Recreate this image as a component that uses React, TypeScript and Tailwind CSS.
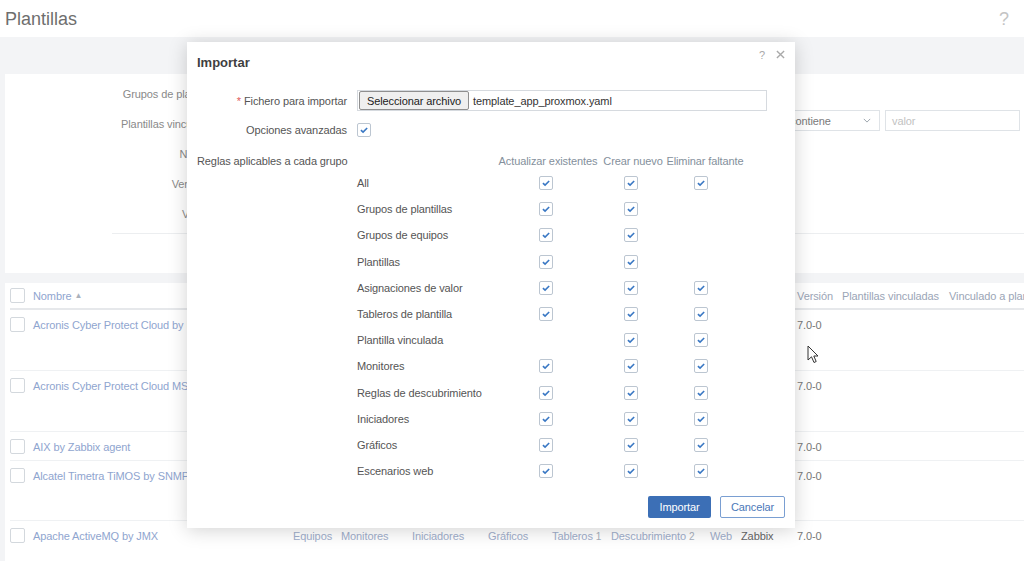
import React from "react"

type Rule = { name: string; marks: (boolean | null)[] }

const rules: Rule[] = [
  { name: "All", marks: [true, true, true] },
  { name: "Grupos de plantillas", marks: [true, true, null] },
  { name: "Grupos de equipos", marks: [true, true, null] },
  { name: "Plantillas", marks: [true, true, null] },
  { name: "Asignaciones de valor", marks: [true, true, true] },
  { name: "Tableros de plantilla", marks: [true, true, true] },
  { name: "Plantilla vinculada", marks: [null, true, true] },
  { name: "Monitores", marks: [true, true, true] },
  { name: "Reglas de descubrimiento", marks: [true, true, true] },
  { name: "Iniciadores", marks: [true, true, true] },
  { name: "Gráficos", marks: [true, true, true] },
  { name: "Escenarios web", marks: [true, true, true] },
]

const rows = [
  { name: "Acronis Cyber Protect Cloud by HTTP", h: "h-[61px]" },
  { name: "Acronis Cyber Protect Cloud MSP by HTTP", h: "h-[61px]" },
  { name: "AIX by Zabbix agent", h: "h-[29px]" },
  { name: "Alcatel Timetra TiMOS by SNMP", h: "h-[60px]" },
  { name: "Apache ActiveMQ by JMX", h: "h-[60px]" },
]

const cols = "grid grid-cols-[23px_260px_48px_71px_76px_64px_59px_99px_31px_56px_45px_107px_200px]"

function Check({ on }: { on?: boolean }) {
  return (
    <span className="inline-flex h-[14px] w-[14px] items-center justify-center rounded-[2px] border border-[#bcc6d1] bg-white">
      {on && (
        <svg viewBox="0 0 12 12" className="h-[10px] w-[10px]">
          <path d="M2.3 6.1 4.9 8.6 9.8 3.6" fill="none" stroke="#3a78c4" strokeWidth="1.9" />
        </svg>
      )}
    </span>
  )
}

function BoxOff() {
  return <span className="block h-[15px] w-[15px] rounded-[2px] border border-[#d3d8dd] bg-white" />
}

function FilterLabel({ text }: { text: string }) {
  return <div className="flex h-[30px] items-center justify-end text-[#8a8a8a]">{text}</div>
}

export default function App() {
  return (
    <div className="relative h-[561px] w-[1024px] overflow-hidden bg-[#f3f4f6] font-['Liberation_Sans',Arial,sans-serif] text-[11px] leading-[14px] tracking-[-0.1px]">
      {/* Header */}
      <div className="flex h-[37px] items-center justify-between bg-white pl-[5px] pr-[15px]">
        <div className="text-[18px] leading-[22px] tracking-normal text-[#6e6e6e]">Plantillas</div>
        <div className="text-[18px] leading-[22px] text-[#c4c4c4]">?</div>
      </div>

      {/* Filter */}
      <div className="ml-[5px] mt-[37px] h-[199px] w-[1100px] bg-white pt-[5px] whitespace-nowrap">
        <div className="flex">
          <div className="w-[213px]">
            <FilterLabel text="Grupos de plantillas" />
            <FilterLabel text="Plantillas vinculadas" />
            <FilterLabel text="Nombre" />
            <FilterLabel text="Vendedor" />
            <FilterLabel text="Versión" />
          </div>
          <div className="ml-[562px] pt-[31px]">
            <div className="flex gap-[5px]">
              <div className="flex h-[21px] w-[100px] items-center justify-between border border-[#dfe3e7] pl-[9px] pr-[8px] text-[#7a7a7a]">
                <span>contiene</span>
                <svg viewBox="0 0 10 6" className="h-[5px] w-[8px]">
                  <path d="M1 1 5 5 9 1" fill="none" stroke="#9aa2aa" strokeWidth="1.2" />
                </svg>
              </div>
              <div className="flex h-[21px] w-[135px] items-center border border-[#dfe3e7] pl-[6px] text-[#c2c2c2]">valor</div>
            </div>
          </div>
        </div>
        <div className="ml-[107px] mt-[4px] h-px w-[993px] bg-[#eceef0]" />
      </div>

      {/* Table */}
      <div className="ml-[5px] mt-[10px] h-[300px] w-[1100px] bg-white pl-[5px] text-[#8fa5cf]">
        <div className={`${cols} h-[27px] items-center border-b-2 border-[#e6e8eb] whitespace-nowrap`}>
          <BoxOff />
          <div className="flex items-center gap-[3px]">
            Nombre <span className="text-[8px] text-[#aab2bc]">▲</span>
          </div>
          <div>Equipos</div>
          <div>Monitores</div>
          <div>Iniciadores</div>
          <div>Gráficos</div>
          <div>Tableros</div>
          <div>Descubrimiento</div>
          <div>Web</div>
          <div>Proveedor</div>
          <div className="text-[#9ba5b6]">Versión</div>
          <div className="text-[#9ba5b6]">Plantillas vinculadas</div>
          <div className="text-[#9ba5b6]">Vinculado a plantillas</div>
        </div>
        {rows.map((r) => (
          <div key={r.name} className={`${cols} ${r.h} items-start border-b border-[#eff1f3] pt-[7px] whitespace-nowrap`}>
            <BoxOff />
            <div className="pt-[1px]">{r.name}</div>
            <div className="pt-[1px] text-[#a0aecb]">Equipos</div>
            <div className="pt-[1px] text-[#a0aecb]">Monitores</div>
            <div className="pt-[1px] text-[#a0aecb]">Iniciadores</div>
            <div className="pt-[1px] text-[#a0aecb]">Gráficos</div>
            <div className="pt-[1px] text-[#a0aecb]">
              Tableros <span className="text-[10px] text-[#a8b0bc]">1</span>
            </div>
            <div className="pt-[1px] text-[#a0aecb]">
              Descubrimiento <span className="text-[10px] text-[#a8b0bc]">2</span>
            </div>
            <div className="pt-[1px] text-[#a0aecb]">Web</div>
            <div className="pt-[1px] text-[#666]">Zabbix</div>
            <div className="pt-[1px] text-[#777]">7.0-0</div>
            <div />
            <div />
          </div>
        ))}
      </div>

      {/* Mouse pointer */}
      <svg viewBox="0 0 12 19" className="absolute left-[807px] top-[345px] h-[19px] w-[12px]">
        <path d="M1 1 1 15 4.5 11.8 7 17.5 9.2 16.5 6.8 11 11 11Z" fill="white" stroke="#333" strokeWidth="1" strokeLinejoin="round" />
      </svg>

      {/* Import dialog */}
      <div className="absolute left-[187px] top-[42px] flex h-[486px] w-[608px] flex-col bg-white px-[10px] whitespace-nowrap shadow-[0_2px_18px_rgba(0,0,0,0.18)]">
        <div className="flex h-[40px] items-center justify-between pt-[1px]">
          <div className="text-[13px] font-bold tracking-normal text-[#3f3f3f]">Importar</div>
          <div className="-mt-[16px] flex items-center gap-[11px] text-[#a9a9a9]">
            <span className="text-[11px]">?</span>
            <svg viewBox="0 0 10 10" className="h-[9px] w-[9px]">
              <path d="M1 1 9 9M9 1 1 9" stroke="#a9a9a9" strokeWidth="1.5" />
            </svg>
          </div>
        </div>

        <div className="mt-[8px] flex items-center">
          <div className="w-[151px] pr-[1px] text-right text-[#555]">
            <span className="text-[#e05a5a]">*</span> Fichero para importar
          </div>
          <div className="ml-[9px] flex h-[21px] w-[410px] items-center border border-[#d6dadf] pl-px">
            <div className="flex h-[19px] w-[110px] items-center justify-center rounded-[2px] border border-[#8f8f8f] bg-[#efefef] text-[#222]">
              Seleccionar archivo
            </div>
            <span className="ml-[4px] text-[#333]">template_app_proxmox.yaml</span>
          </div>
        </div>

        <div className="mt-[12px] flex items-center">
          <div className="w-[151px] pr-[1px] text-right text-[#555]">Opciones avanzadas</div>
          <div className="ml-[9px] flex">
            <Check on />
          </div>
        </div>

        <div className="mt-[15px] grid grid-cols-[160px_138px_106px_64px_80px]">
          <div className="flex h-[18px] items-center text-[#555]">Reglas aplicables a cada grupo</div>
          <div />
          <div className="flex h-[18px] items-center justify-center text-[#84909c]">Actualizar existentes</div>
          <div className="flex h-[18px] items-center justify-center text-[#84909c]">Crear nuevo</div>
          <div className="flex h-[18px] items-center justify-center text-[#84909c]">Eliminar faltante</div>
          {rules.map((r) => (
            <React.Fragment key={r.name}>
              <div className="h-[26.2px]" />
              <div className="flex h-[26.2px] items-center text-[#555]">{r.name}</div>
              <div className="flex h-[26.2px] items-center justify-center pr-[4px]">{r.marks[0] && <Check on />}</div>
              <div className="flex h-[26.2px] items-center justify-center pr-[4px]">{r.marks[1] && <Check on />}</div>
              <div className="flex h-[26.2px] items-center justify-center pr-[8px]">{r.marks[2] && <Check on />}</div>
            </React.Fragment>
          ))}
        </div>

        <div className="mt-[12px] flex justify-end gap-[9px]">
          <button className="h-[22px] w-[63px] rounded-[2px] bg-[#3c6fb6] text-white">Importar</button>
          <button className="h-[22px] w-[65px] rounded-[2px] border border-[#7a9fd2] bg-white text-[#4b78b8]">Cancelar</button>
        </div>
      </div>
    </div>
  )
}
